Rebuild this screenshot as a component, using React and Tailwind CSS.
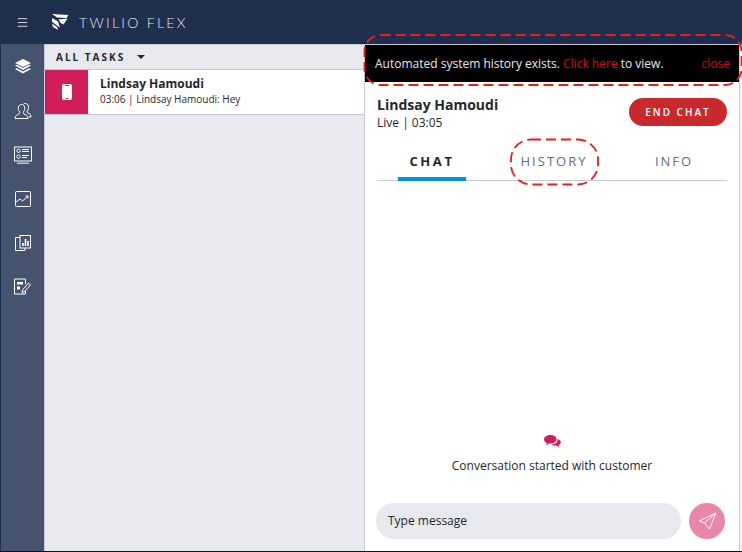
import React from 'react';
import { Menu } from 'lucide-react';

const FlexLogo = () => (
  <svg width="17" height="16" viewBox="0 0 17 16" fill="#fff">
    <path d="M0 0 L16.5 1 L14.5 4 L5 3.6 Z" />
    <path d="M6.5 5.4 L15.5 4.4 L11.5 10.6 L8.8 9 Z" />
    <path d="M0 4 L6 7.6 L8 13.8 L0 7.8 Z" />
    <path d="M0 9.4 L5 13 L6 16 L1 13 Z" />
  </svg>
);

const LayersIcon = () => (
  <svg width="18" height="18" viewBox="0 0 18 18" fill="#fff">
    <path d="M9 1 L17 5 L9 9 L1 5 Z" />
    <path d="M1 7.6 L3 6.8 L9 10 L15 6.8 L17 7.6 L9 12 Z" />
    <path d="M1 11 L3 10.2 L9 13.4 L15 10.2 L17 11 L9 15.5 Z" />
  </svg>
);

const AgentsIcon = () => (
  <svg width="18" height="18" viewBox="0 0 18 18" fill="none" stroke="#fff" strokeWidth="1">
    <path d="M1 16.5 C1 13.5 3 13 5 12 C6 11.5 6 10.5 5.3 9.5 C3.5 7 4 2.5 7.5 2.5 C11 2.5 11.5 7 9.7 9.5 C9 10.5 9 11.5 10 12 C12 13 14 13.5 14 16.5 Z" />
    <path d="M9.5 2 C10.5 1 14.5 1 14.5 5.5 C14.5 7 14 8 13.2 9 C12.6 10 13 10.6 14 11 C15.5 11.7 17 12.3 17 15 L14.5 15" />
  </svg>
);

const QueueIcon = () => (
  <svg width="18" height="18" viewBox="0 0 18 18" fill="none" stroke="#fff" strokeWidth="1">
    <rect x="0.5" y="1" width="17" height="14" />
    <circle cx="4.5" cy="4.8" r="1.7" />
    <circle cx="4.5" cy="10.6" r="1.7" />
    <path d="M8 3.5 H15 M8 5.5 H15 M8 9.5 H15 M8 11.5 H13 M3 17.2 H15" />
  </svg>
);

const TrendIcon = () => (
  <svg width="16" height="16" viewBox="0 0 16 16" fill="none" stroke="#fff" strokeWidth="1">
    <rect x="0.5" y="0.5" width="15" height="15" rx="1" />
    <path d="M1 11 L5 8 L7.5 10 L12.5 5.5 M10.5 5 H13 V7.5" />
  </svg>
);

const ReportIcon = () => (
  <svg width="16" height="16" viewBox="0 0 16 16" fill="none" stroke="#fff" strokeWidth="1">
    <path d="M5 2.5 H0.5 V15.5 H10 V13" />
    <rect x="5" y="0.5" width="10.5" height="12.5" />
    <path d="M8 11 V8 M10.5 11 V4 M13 11 V6" strokeWidth="1.6" />
  </svg>
);

const EditIcon = () => (
  <svg width="17" height="17" viewBox="0 0 17 17" fill="none" stroke="#fff" strokeWidth="1">
    <path d="M11.5 6 V1 H0.5 V16 H11.5 V12" />
    <rect x="3" y="4" width="6" height="2.5" fill="#fff" stroke="none" />
    <rect x="3" y="8.5" width="3" height="3" fill="#fff" stroke="none" />
    <path d="M8.5 12 L14.5 5 L16.5 6.8 L10.5 13.6 L8 14.5 Z" />
  </svg>
);

const BubblesIcon = () => (
  <svg width="17" height="15" viewBox="0 0 17 15" fill="#d21d5b">
    <path d="M6.5 0 C10 0 12.5 1.8 12.5 4.3 C12.5 6.8 10 8.6 6.5 8.6 L4.8 8.6 L2.2 10.5 L2.8 7.9 C1 7.2 0 5.9 0 4.3 C0 1.8 3 0 6.5 0 Z" />
    <path d="M13.5 4 C15.5 4.5 16.8 5.6 16.8 7.2 C16.8 8.5 16 9.5 14.6 10 L15.2 12.5 L12.3 10.6 L9 10.4 L7.5 9.4 C11 9.5 14 7.5 13.5 4 Z" />
  </svg>
);

const SendIcon = () => (
  <svg width="19" height="18" viewBox="0 0 19 18" fill="none" stroke="#fff" strokeWidth="1" strokeLinejoin="round">
    <path d="M18 1 L1 9 L6.5 11 L11.5 17 Z" />
    <path d="M18 1 L6.5 11" />
  </svg>
);

const navIcons = [
  { id: 'tasks', icon: <LayersIcon /> },
  { id: 'agents', icon: <AgentsIcon /> },
  { id: 'queues', icon: <QueueIcon /> },
  { id: 'trend', icon: <TrendIcon /> },
  { id: 'reports', icon: <ReportIcon /> },
  { id: 'edit', icon: <EditIcon /> },
];

const App = () => {
  return (
    <div className="relative w-[742px] h-[552px] overflow-hidden flex flex-col bg-white text-[#24272c] font-['Open_Sans',sans-serif]">
      {/* Header */}
      <header className="h-[44px] shrink-0 bg-[#1f304f] flex items-center text-white">
        <div className="w-[44px] flex justify-center">
          <Menu size={13} strokeWidth={1.5} />
        </div>
        <div className="ml-[8px] flex items-center gap-[10px]">
          <FlexLogo />
          <span className="text-[14px] font-light tracking-[2.3px] text-[#e4e7ee] font-['Lato',sans-serif]">TWILIO FLEX</span>
        </div>
      </header>

      <div className="flex-1 flex min-h-0 border-b border-[#111]">
        {/* Sidebar */}
        <nav className="w-[45px] shrink-0 bg-[#45536f] border-l border-[#1f304f] border-r border-r-[#c5c9d6] flex flex-col items-center pt-[13px] gap-[25px]">
          {navIcons.map((item) => (
            <div key={item.id} className="h-[19px] flex items-center justify-center">{item.icon}</div>
          ))}
        </nav>

        {/* Task list */}
        <section className="w-[319px] shrink-0 bg-[#e8e9ef] border-t border-[#c5c9d6]">
          <div className="h-[25px] pl-[11px] flex items-center gap-[12px] border-b border-[#c5c9d6]">
            <span className="text-[10px] font-bold tracking-[2px]">ALL TASKS</span>
            <span className="w-0 h-0 border-x-[4px] border-x-transparent border-t-[4px] border-t-[#24272c]"></span>
          </div>
          <div className="h-[45px] flex bg-white border-b border-[#c5c9d6]">
            <div className="w-[43px] bg-[#d21d5b] flex items-center justify-center">
              <div className="relative w-[10px] h-[16px] rounded-[2px] bg-white">
                <span className="absolute left-[4px] bottom-[1px] w-[2px] h-[1px] bg-[#d21d5b]"></span>
                <span className="absolute left-[3px] top-[1px] w-[4px] h-[1px] bg-[#d21d5b]"></span>
              </div>
            </div>
            <div className="pl-[12px] pt-[5px]">
              <div className="text-[12px] leading-[17px] font-bold">Lindsay Hamoudi</div>
              <div className="text-[10px] leading-[14px]">03:06 | Lindsay Hamoudi: Hey</div>
            </div>
          </div>
        </section>

        {/* Chat panel */}
        <section className="w-[376px] shrink-0 flex flex-col bg-white border-l border-r border-t border-[#c5c9d6]">
          <div className="h-[37px] shrink-0 bg-black flex items-center justify-between pl-[10px] pr-[9px] text-[12px] text-[#e8e8e8]">
            <span>Automated system history exists. <span className="text-[#e0000f]">Click here</span> to view.</span>
            <span className="text-[#e0000f]">close</span>
          </div>

          <div className="px-[12px] flex justify-between pt-[13px]">
            <div>
              <div className="text-[14px] leading-[19px] font-bold">Lindsay Hamoudi</div>
              <div className="text-[12px] leading-[16px] mt-[1px]">Live | 03:05</div>
            </div>
            <button className="mt-[3px] w-[98px] h-[28px] rounded-full bg-[#c9292d] text-white text-[10px] font-semibold tracking-[2px]">END CHAT</button>
          </div>

          <div className="mx-[12px] mt-[14px] h-[36px] pb-[2px] shrink-0 flex border-b border-[#c5c9d6]">
            <div className="w-[110px] relative flex items-center justify-center text-[13px] font-bold tracking-[2.6px]">
              CHAT
              <span className="absolute left-[21px] w-[68px] -bottom-[3px] h-[4px] bg-[#0091ea]"></span>
            </div>
            <div className="w-[134px] flex items-center justify-center text-[13px] tracking-[2px] text-[#666b75]">HISTORY</div>
            <div className="flex-1 flex items-center justify-center text-[13px] tracking-[2px] text-[#666b75]">INFO</div>
          </div>

          <div className="flex-1 flex flex-col items-center justify-end pb-[29px] min-h-0">
            <BubblesIcon />
            <div className="text-[12px] leading-[16px] mt-[8px]">Conversation started with customer</div>
          </div>

          <div className="pl-[11px] pr-[14px] pb-[12px] flex gap-[8px] items-center">
            <div className="flex-1 h-[36px] rounded-full bg-[#e8e9ef] flex items-center pl-[12px] text-[12px]">Type message</div>
            <div className="w-[36px] h-[36px] rounded-full bg-[#e986aa] flex items-center justify-center">
              <SendIcon />
            </div>
          </div>
        </section>
        <div className="flex-1 bg-[#f7f7f9]"></div>
      </div>

      {/* Red dashed annotations drawn over the screenshot */}
      <svg className="absolute left-0 top-0 pointer-events-none" width="742" height="552" fill="none" stroke="#f01a1a" strokeWidth="1.8" strokeDasharray="10 5">
        <rect x="364.5" y="35" width="377" height="50" rx="16" />
        <rect x="511" y="139.5" width="87" height="45" rx="20" />
      </svg>
    </div>
  );
};

export default App;
